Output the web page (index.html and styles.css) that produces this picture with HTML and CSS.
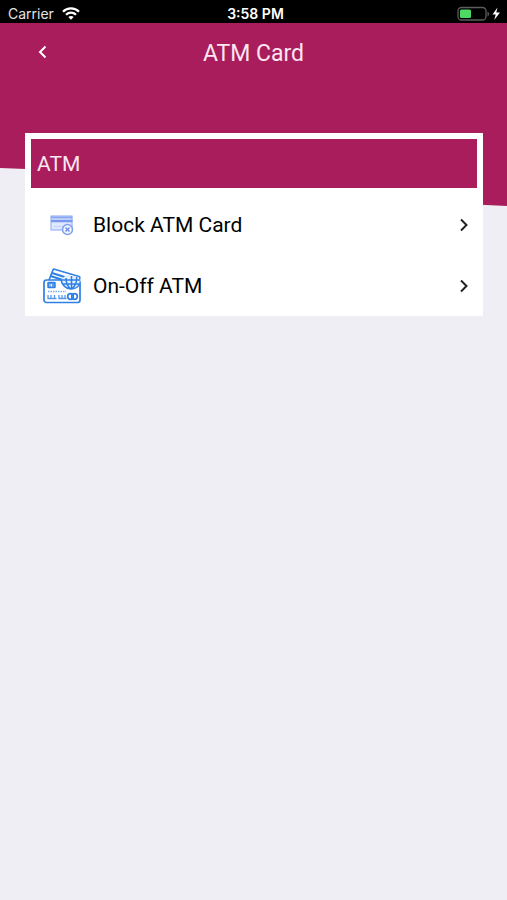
FILE: index.html
```html
<!DOCTYPE html>
<html lang="en">
<head>
<meta charset="utf-8">
<meta name="viewport" content="width=device-width, initial-scale=1">
<title>ATM Card</title>
<link rel="stylesheet" href="styles.css">
</head>
<body>
<div class="status">
  <div class="status-left">
    <span>Carrier</span>
    <svg width="18" height="14" viewBox="0 0 18 14" fill="none" stroke="#fff" stroke-width="2.3" aria-hidden="true">
      <path d="M1 4.700C5.400.2 12.600.2 17 4.700"/>
      <path d="M4 7.800c2.800-2.800 7.200-2.800 10 0"/>
      <path d="M9 12.700 6.300 10c1.500-1.400 3.900-1.400 5.400 0z" fill="#fff" stroke="none"/>
    </svg>
  </div>
  <span class="time">3:58 PM</span>
  <div class="status-right">
    <svg width="46" height="16" viewBox="0 0 46 16" aria-hidden="true">
      <rect x="1" y="1.500" width="28" height="12.500" rx="3.500" fill="none" stroke="#5c5c5e" stroke-width="1.300"/>
      <rect x="3" y="3.500" width="11" height="8.500" rx="1.500" fill="#4cd964"/>
      <path d="M30.500 5.500c2 .8 2 4.200 0 5z" fill="#5c5c5e"/>
      <path d="M40.500 1.500 35.500 8.500h3.200l-1.500 5.500L43 6.500h-3.700z" fill="#fff"/>
    </svg>
  </div>
</div>
<div class="screen">
  <svg class="backdrop" viewBox="0 0 507 184" preserveAspectRatio="none" aria-hidden="true">
    <path d="M0 0H507V183C340 176 170 150 0 145Z" fill="#a91d5c"/>
  </svg>
  <header class="topbar">
    <button class="back" aria-label="Back">
      <svg width="10" height="14" viewBox="0 0 10 14" fill="none" stroke="#fff" stroke-width="2" aria-hidden="true"><path d="M8.500 1.500 3 7l5.500 5.500"/></svg>
    </button>
    <h1>ATM Card</h1>
  </header>
  <main class="card">
    <h2>ATM</h2>
    <a class="row" href="#block">
      <svg class="icon" width="38" height="38" viewBox="0 0 38 38" fill="none" aria-hidden="true">
        <rect x="8" y="10" width="21" height="14" fill="#dfe8ff" stroke="#8ba8f4"/>
        <path d="M8 11.500h21.500" stroke="#8aa7f4" stroke-width="2"/>
        <path d="M8 15h21.500" stroke="#7898f0" stroke-width="2.500"/>
        <path d="M11 20.500h8" stroke="#c2d1fb"/>
        <circle cx="24.500" cy="23.500" r="5" fill="#f4f7ff" stroke="#7f9ff2" stroke-width="1.500"/>
        <path d="m22.500 21.500 4 4m0-4-4 4" stroke="#6f91ee" stroke-width="1.500"/>
      </svg>
      <span class="label">Block ATM Card</span>
      <svg class="chevron" width="10" height="14" viewBox="0 0 10 14" aria-hidden="true"><path d="M2 1.500 7.500 7 2 12.500"/></svg>
    </a>
    <a class="row" href="#on-off">
      <svg class="icon" width="38" height="38" viewBox="0 0 38 38" fill="none" stroke="#2f80e4" stroke-width="1.700" aria-hidden="true">
        <path d="m6 13 4-10q.5-1 1.500-.7L36 9.500q1 .3.800 1.500L36 14"/>
        <path d="m9 6 22 7M7.500 9 20 13" stroke-width="2.200"/>
        <rect x="1" y="13" width="36" height="22.500" rx="2.500" fill="#fff"/>
        <path d="M18 13c1 5 5 9 10 9s8-4 9-9c-3-5-13-6-16-3z" fill="#e5f0ff" stroke="none"/>
        <path d="M18 13c1 5 5 9 10 9 4 0 7-2 8.500-5M23 11c0 5 2 9 5 11M28.500 9v13M33.500 10c1 4-1 9-5 12M20 17h16M17 13h20" stroke-width="1.500"/>
        <rect x="5" y="15.500" width="7" height="5" rx=".5" fill="#5c9dec" stroke-width="1.500"/>
        <path d="M8.500 17v3M6 18h3" stroke="#fff" stroke-width=".7"/>
        <path d="M5 24.500h18" stroke="#78aef0" stroke-dasharray="1.500 1"/>
        <path d="M5 28v3.500h8.500M8 28v3M11.500 28v3M16 28v3.500h7.500M19 28v3M22 28v3" stroke="#5398ed" stroke-width="1.300"/>
        <circle cx="27.500" cy="29.500" r="2.800"/>
        <circle cx="31.500" cy="29.500" r="2.800"/>
      </svg>
      <span class="label">On-Off ATM</span>
      <svg class="chevron" width="10" height="14" viewBox="0 0 10 14" aria-hidden="true"><path d="M2 1.500 7.500 7 2 12.500"/></svg>
    </a>
  </main>
</div>
</body>
</html>
```
FILE: styles.css
```css
* {
  box-sizing: border-box;
}

body {
  margin: 0;
  min-height: 100vh;
  background: #efeef4;
  font-family: Roboto, "Liberation Sans", sans-serif;
  color: #000;
}

.status {
  display: grid;
  grid-template-columns: 1fr auto 1fr;
  align-items: center;
  height: 23px;
  padding: 4px 4px 0 8px;
  background: #000;
  color: #e4e4e4;
  font-family: Inter, "Liberation Sans", sans-serif;
  font-size: 14px;
  line-height: 18px;
}

.status-left {
  display: flex;
  align-items: center;
  gap: 8px;
}

.status-right {
  display: flex;
  justify-content: flex-end;
}

.status svg {
  display: block;
}

.time {
  color: #fff;
  font-weight: 600;
}

.screen {
  position: relative;
  isolation: isolate;
}

.backdrop {
  position: absolute;
  z-index: -1;
  top: 0;
  left: 0;
  width: 100%;
  height: 184px;
}

.topbar {
  display: grid;
  grid-template-columns: 48px 1fr 48px;
  align-items: center;
  height: 62px;
  padding: 0 18px;
  color: #fff;
}

.back {
  display: flex;
  align-items: center;
  justify-content: center;
  height: 48px;
  padding: 0 0 4px;
  border: 0;
  background: none;
}

h1,
h2 {
  margin: 0;
  font-weight: 400;
  color: #fbe6f1;
}

h1 {
  font-size: 23px;
  line-height: 32px;
  text-align: center;
}

.card {
  margin: 48px 24px 0 25px;
  padding: 6px 6px 0;
  background: #fff;
}

h2 {
  margin-bottom: 6px;
  padding: 10px 6px 9px;
  background: #a91d5c;
  font-size: 21px;
  line-height: 30px;
}

.row {
  display: flex;
  align-items: center;
  gap: 12px;
  height: 61px;
  padding: 0 8px 0 12px;
  color: inherit;
  font-size: 21px;
  line-height: 30px;
  text-decoration: none;
}

.label {
  flex: 1;
}

.chevron {
  fill: none;
  stroke: #222;
  stroke-width: 2;
}
```
